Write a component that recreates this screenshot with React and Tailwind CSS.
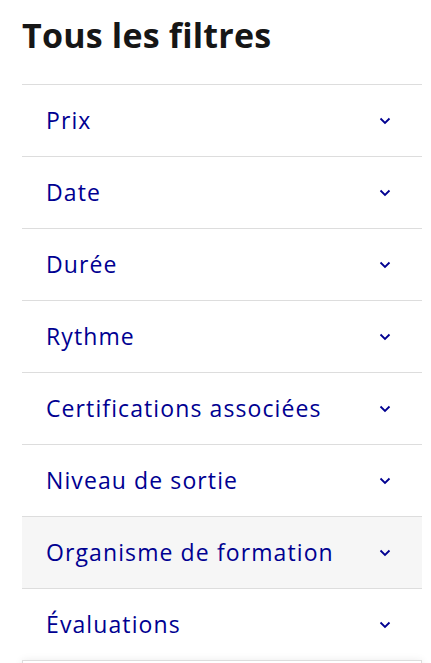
const filters = [
  "Prix",
  "Date",
  "Durée",
  "Rythme",
  "Certifications associées",
  "Niveau de sortie",
  "Organisme de formation",
  "Évaluations",
];

function Chevron() {
  return (
    <svg width="12" height="8" viewBox="0 0 12 8" fill="none" className="shrink-0">
      <path d="M1.5 1.5 6 6l4.5-4.5" stroke="#000091" strokeWidth="1.8" />
    </svg>
  );
}

export default function App() {
  return (
    <div
      className="h-[663px] bg-white pl-[22px] pr-[9px] pt-[10px] overflow-hidden"
      style={{ fontFamily: '"Open Sans", "Noto Sans", sans-serif' }}
    >
      <h2 className="text-[34px] leading-[50px] font-bold text-[#161616] mb-[24px] tracking-[0.2px]">
        Tous les filtres
      </h2>
      <div>
        {filters.map((label) => (
          <button
            key={label}
            className={`w-full h-[72px] flex items-center justify-between border-t border-[#dddddd] pl-6 pr-[31px] text-left ${
              label === "Organisme de formation" ? "bg-[#f6f6f6]" : "bg-white"
            }`}
          >
            <span className="text-[23px] leading-[30px] font-medium text-[#000091] tracking-[1.1px] -mt-[2px]">
              {label}
            </span>
            <Chevron />
          </button>
        ))}
        <div className="h-10 border border-[#dddddd] shadow-[0_0_8px_rgba(0,0,0,0.08)]" />
      </div>
    </div>
  );
}
